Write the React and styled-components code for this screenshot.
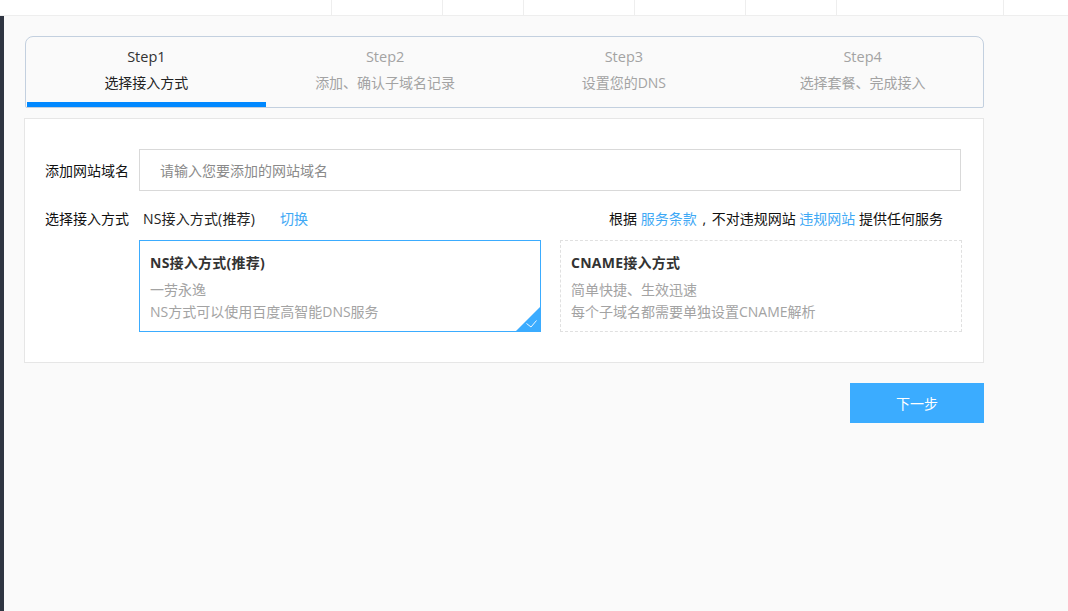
import React from "react";
import styled, { createGlobalStyle } from "styled-components";

const Global = createGlobalStyle`
  html, body { margin: 0; padding: 0; height: 100%; background: #fafafa; }
  body { font-family: "Open Sans", "Noto Sans CJK SC", sans-serif; font-size: 14px; color: #000; overflow: hidden; }
  * { box-sizing: border-box; }
`;

const TopBar = styled.div`
  height: 16px; background: #fff; border-bottom: 1px solid #eeeeee; display: flex; padding-left: 331px;
`;
const TopCell = styled.div`
  width: ${p => p.$w}px; height: 15px; border-left: 1px solid #eeeeee;
`;
const Shell = styled.div`
  display: flex; height: 595px;
`;
const Rail = styled.div`
  width: 4px; background: #2f3542; flex: none;
`;
const Main = styled.main`
  width: 960px; margin-left: 20px; padding-top: 20px;
`;
const Steps = styled.div`
  margin-left: 1px; height: 72px; border: 1px solid #c3d0df; border-radius: 8px 8px 2px 2px; background: #fafafa;
  display: flex; padding: 0 1px;
`;
const Step = styled.div`
  width: 239px; height: 70px; text-align: center; color: ${p => p.$active ? "#333" : "#a3a3a3"};
  border-bottom: ${p => p.$active ? "5px solid #0088ff" : "none"};
  padding-top: 9px;
`;
const StepNo = styled.div`
  font-size: 14.5px; line-height: 22px; height: 22px;
`;
const StepText = styled.div`
  font-size: 14px; line-height: 20px; margin-top: 5px; color: ${p => p.$active ? "#222" : "#a3a3a3"};
`;
const Panel = styled.section`
  margin-top: 10px; height: 245px; background: #fff; border: 1px solid #e6e6e6; padding: 30px 0 0 20px;
`;
const Row = styled.div`
  display: flex; align-items: center;
`;
const Label = styled.label`
  width: 84px; flex: none; line-height: 20px; color: #111; white-space: nowrap; padding-top: 1px;
`;
const DomainInput = styled.div`
  margin-left: 10px; width: 822px; height: 42px; border: 1px solid #d9d9d9; padding: 1px 0 0 20px;
  line-height: 40px; color: #8a8a8a; background: #fff;
`;
const ModeRow = styled(Row)`
  margin-top: 17px; height: 20px; width: 898px;
`;
const Current = styled.span`
  margin-left: 14px; color: #222; white-space: nowrap; letter-spacing: 0.15px;
`;
const Link = styled.a`
  color: #3fa9f5; white-space: nowrap;
`;
const SwitchLink = styled(Link)`
  margin-left: 25px;
`;
const Terms = styled.div`
  margin-left: auto; color: #111; white-space: nowrap;
`;
const Comma = styled.span`
  display: inline-block; width: 15px; text-align: center;
`;
const Cards = styled.div`
  display: flex; gap: 19px; margin: 12px 0 0 94px;
`;
const Card = styled.div`
  position: relative; width: 402px; height: 92px; padding: 11px 10px 0;
  border: 1px ${p => p.$selected ? "solid #3bacff" : "dashed #e0e0e0"}; overflow: hidden;
`;
const CardTitle = styled.div`
  font-weight: 700; font-size: 14px; line-height: 22px; color: #333; letter-spacing: 0.25px;
`;
const CardText = styled.div`
  margin-top: 5px; font-size: 14px; line-height: 22px; color: #a3a3a3;
`;
const Corner = styled.svg`
  position: absolute; right: 0; bottom: 0; width: 24px; height: 24px; display: block;
`;
const Actions = styled.div`
  display: flex; justify-content: flex-end; margin-top: 20px;
`;
const NextButton = styled.button`
  width: 134px; height: 40px; border: 0; background: #3bacff; color: #fff; font: inherit; font-size: 14px; padding: 0;
`;

const steps = [
  ["Step1", "选择接入方式"],
  ["Step2", "添加、确认子域名记录"],
  ["Step3", "设置您的DNS"],
  ["Step4", "选择套餐、完成接入"],
];

export default function App() {
  return (
    <>
      <Global />
      <TopBar>
        {[111, 81, 111, 111, 91, 167, 64].map((w, i) => <TopCell key={i} $w={w} />)}
      </TopBar>
      <Shell>
        <Rail />
        <Main>
          <Steps>
            {steps.map(([n, t], i) => (
              <Step key={n} $active={i === 0}>
                <StepNo>{n}</StepNo>
                <StepText $active={i === 0}>{t}</StepText>
              </Step>
            ))}
          </Steps>
          <Panel>
            <Row>
              <Label>添加网站域名</Label>
              <DomainInput>请输入您要添加的网站域名</DomainInput>
            </Row>
            <ModeRow>
              <Label>选择接入方式</Label>
              <Current>NS接入方式(推荐)</Current>
              <SwitchLink>切换</SwitchLink>
              <Terms>根据 <Link>服务条款</Link><Comma>,</Comma>不对违规网站 <Link>违规网站</Link> 提供任何服务</Terms>
            </ModeRow>
            <Cards>
              <Card $selected>
                <CardTitle>NS接入方式(推荐)</CardTitle>
                <CardText>一劳永逸<br />NS方式可以使用百度高智能DNS服务</CardText>
                <Corner viewBox="0 0 24 24">
                  <path d="M24 0V24H0Z" fill="#3bacff" />
                  <path d="M10.5 16.5l4.5 3.5 5.5-6.5" fill="none" stroke="#fff" strokeWidth="1" opacity="0.9" />
                </Corner>
              </Card>
              <Card>
                <CardTitle>CNAME接入方式</CardTitle>
                <CardText>简单快捷、生效迅速<br />每个子域名都需要单独设置CNAME解析</CardText>
              </Card>
            </Cards>
          </Panel>
          <Actions>
            <NextButton>下一步</NextButton>
          </Actions>
        </Main>
      </Shell>
    </>
  );
}
